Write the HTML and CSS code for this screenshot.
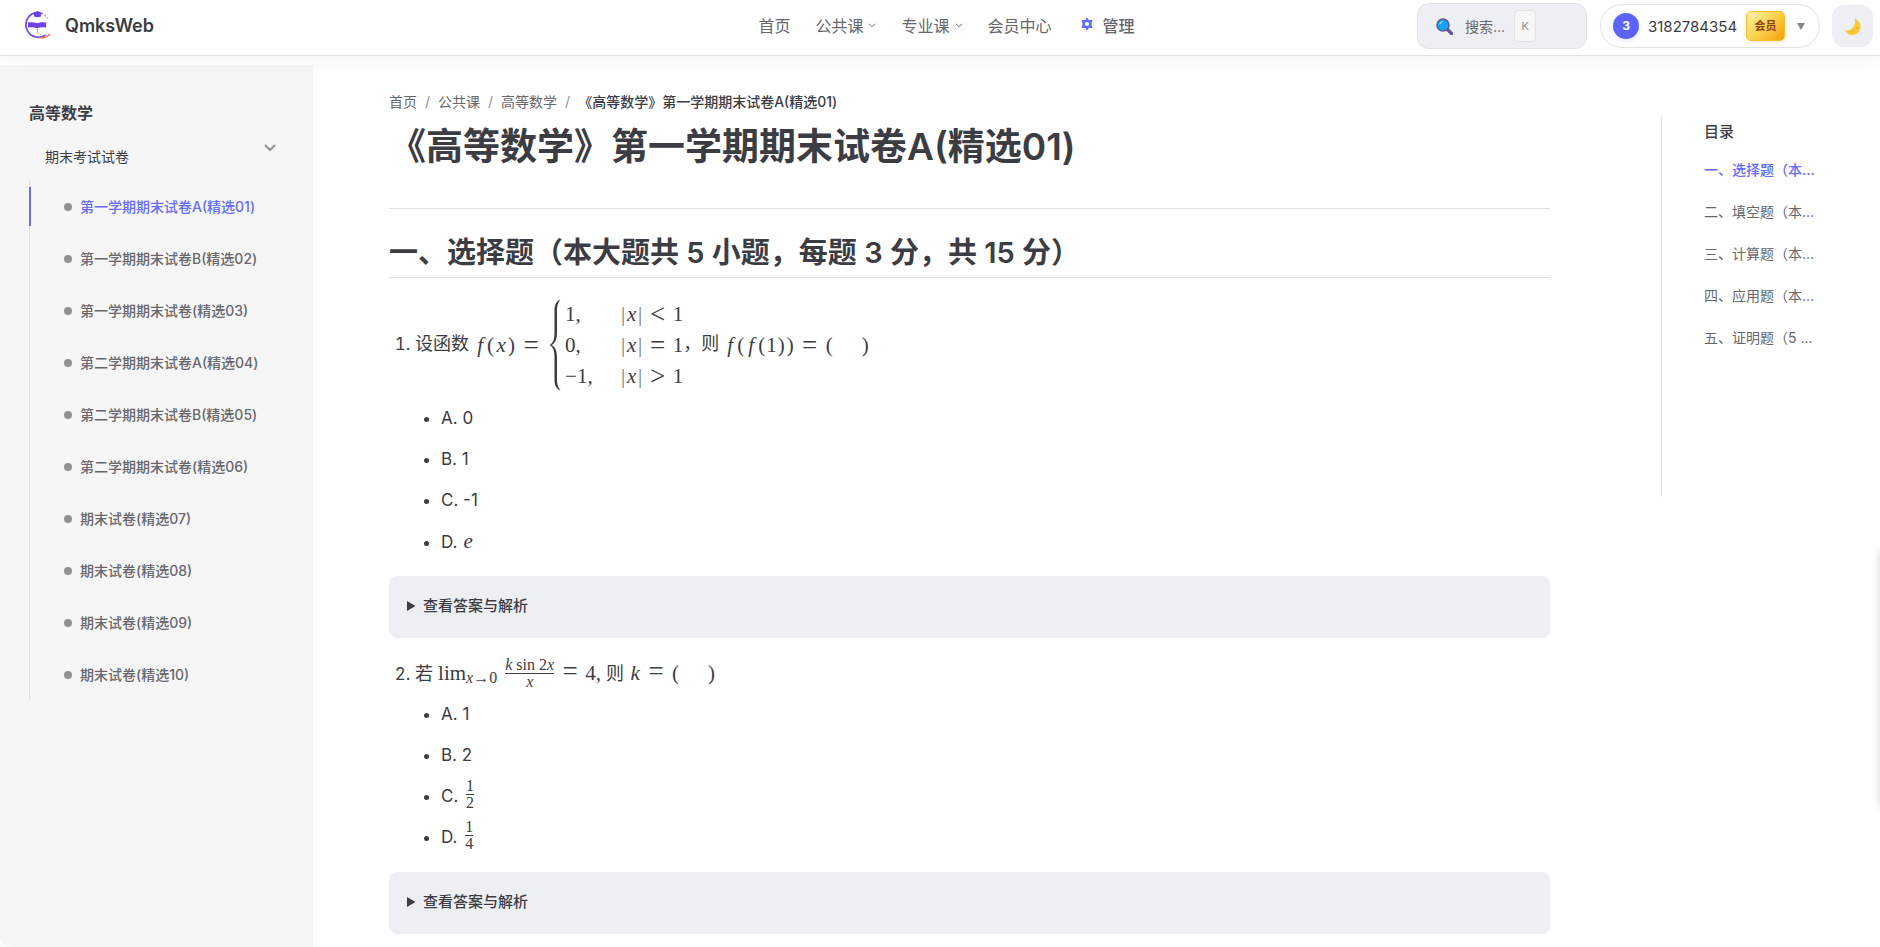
FILE: index.html
```html
<!DOCTYPE html>
<html lang="zh-CN">
<head>
<meta charset="utf-8">
<meta name="viewport" content="width=device-width, initial-scale=1">
<title>QmksWeb</title>
<link rel="stylesheet" href="styles.css">
</head>
<body>
<header class="header">
  <a class="brand" href="#">
    <svg class="logo" viewBox="0 0 28 30" fill="none">
      <path d="M8 4A12.500 12.500 0 1 0 21 25.500" stroke="#7353ee" stroke-width="1.800" stroke-linecap="round"/>
      <path d="M7 3.500L13.500 1L19.500 3.500L13.500 6Z" fill="#6b3fe6"/>
      <path d="M10 4.500h7v2q-3.500 1.600-7 0z" fill="#6b3fe6"/>
      <path d="M4 12.500q5-1 9.200 .8q4-1.800 9-.8v5q-5-1-9 .8q-4.200-1.800-9.200-.8z" fill="#7040ea"/>
      <path d="M13.300 19v2l1 3" stroke="#ff8a70"/>
      <path d="M15 27.500q6 1.500 11-3.500" stroke="#ff6b4e" stroke-width="1.500"/>
      <circle cx="21" cy="5.500" r=".9" fill="#ff7b5c"/><circle cx="23.500" cy="8" r=".8" fill="#ff7b5c"/>
    </svg>
    <span>QmksWeb</span>
  </a>
  <nav class="nav">
    <a href="#">首页</a>
    <a href="#">公共课<svg class="caret" viewBox="0 0 8 5"><path d="M1 .8l3 3 3-3"/></svg></a>
    <a href="#">专业课<svg class="caret" viewBox="0 0 8 5"><path d="M1 .8l3 3 3-3"/></svg></a>
    <a href="#">会员中心</a>
    <a class="manage" href="#"><svg class="gear" viewBox="0 0 12 14"><path fill-rule="evenodd" d="M6 .5L7.800 3H11.500L10.400 7l1.100 4H7.800L6 13.500 4.200 11H.5L1.600 7 .5 3h3.700zM6 5a2 2 0 1 0 0 4 2 2 0 0 0 0-4z"/></svg>管理</a>
  </nav>
  <div class="tools">
    <button class="search" type="button">
      <svg class="lens" viewBox="0 0 17 17"><path d="M10.500 10.500l5 5" stroke="#62559a" stroke-width="3.400" stroke-linecap="round"/><circle cx="7" cy="7" r="6" fill="#12a5f2" stroke="#62559a" stroke-width="1.500"/><path d="M3.800 6q.7-2 2.500-2.400" fill="none" stroke="#8bd8ff" stroke-width="1.200" stroke-linecap="round"/></svg>
      <span>搜索...</span><kbd>K</kbd>
    </button>
    <button class="user" type="button">
      <span class="avatar">3</span><span class="name">3182784354</span><span class="badge">会员</span><svg class="drop" viewBox="0 0 8 7"><path d="M0 0h8L4 7z"/></svg>
    </button>
    <button class="theme" type="button" aria-label="切换主题">
      <svg viewBox="0 0 17 17"><path d="M10.800.8A8.300 8.300 0 1 1 .8 12.200C8 13.500 11.800 8 10.800.8z" fill="#fbc83a"/><circle cx="13" cy="10" r="1" fill="#eba72b"/><circle cx="8.500" cy="13.500" r=".9" fill="#eba72b"/></svg>
    </button>
  </div>
</header>
<div class="layout">
  <aside class="sidebar">
    <h2 class="side-title">高等数学</h2>
    <div class="group"><span>期末考试试卷</span><svg class="chevron" viewBox="0 0 12 8"><path d="M1 1l5 5 5-5"/></svg></div>
    <ul class="papers">
      <li class="active"><a href="#">第一学期期末试卷A(精选01)</a></li>
      <li><a href="#">第一学期期末试卷B(精选02)</a></li>
      <li><a href="#">第一学期期末试卷(精选03)</a></li>
      <li><a href="#">第二学期期末试卷A(精选04)</a></li>
      <li><a href="#">第二学期期末试卷B(精选05)</a></li>
      <li><a href="#">第二学期期末试卷(精选06)</a></li>
      <li><a href="#">期末试卷(精选07)</a></li>
      <li><a href="#">期末试卷(精选08)</a></li>
      <li><a href="#">期末试卷(精选09)</a></li>
      <li><a href="#">期末试卷(精选10)</a></li>
    </ul>
  </aside>
  <main class="content">
    <nav class="crumbs"><a href="#">首页</a><i>/</i><a href="#">公共课</a><i>/</i><a href="#">高等数学</a><i>/</i><span>《高等数学》第一学期期末试卷A(精选01)</span></nav>
    <h1>《高等数学》第一学期期末试卷A(精选01)</h1>
    <h2 class="section">一、选择题（本大题共 5 小题，每题 3 分，共 15 分）</h2>
    <ol class="question">
      <li>
        <div class="stem tall">设函数
          <span class="math"><var>f</var><b>(</b><var>x</var><b>)</b><u>=</u><svg class="brace" viewBox="0 0 12 92"><path d="M11.500.5C6 2.500 5.500 7 5.500 13v20c0 7-1 11-5 13 4 2 5 6 5 13v20c0 6 .5 10.500 6 12.500-3-3-3.500-7-3.500-12V59c0-7-1.500-11-5.500-13 4-2 5.500-6 5.500-13V13c0-5 .5-9.500 3.500-12.500z"/></svg><span class="cases"><span>1,</span><span><s>|</s><var>x</var><s>|</s><u>&lt;</u>1</span><span>0,</span><span><s>|</s><var>x</var><s>|</s><u>=</u>1</span><span>−1,</span><span><s>|</s><var>x</var><s>|</s><u>&gt;</u>1</span></span></span>，则
          <span class="math"><var>f</var><b>(</b><var>f</var><b>(</b>1<b>)</b><b>)</b><u>=</u><b>(</b><span class="blank"></span><b>)</b></span>
        </div>
        <ul><li>A. 0</li><li>B. 1</li><li>C. -1</li><li>D. <span class="math"><var>e</var></span></li></ul>
      </li>
    </ol>
    <details class="answer"><summary>查看答案与解析</summary></details>
    <ol class="question compact" start="2">
      <li>
        <div class="stem">若
          <span class="math">lim<sub>x→<em>0</em></sub><span class="frac wide"><span><i>k</i> sin 2<i>x</i></span><span><i>x</i></span></span><u>=</u>4,</span> 则
          <span class="math"><var>k</var><u>=</u><b>(</b><span class="blank"></span><b>)</b></span>
        </div>
        <ul><li>A. 1</li><li>B. 2</li><li>C. <span class="frac math small"><span>1</span><span>2</span></span></li><li>D. <span class="frac math small"><span>1</span><span>4</span></span></li></ul>
      </li>
    </ol>
    <details class="answer"><summary>查看答案与解析</summary></details>
  </main>
  <aside class="toc">
    <h2>目录</h2>
    <a class="current" href="#">一、选择题（本...</a>
    <a href="#">二、填空题（本...</a>
    <a href="#">三、计算题（本...</a>
    <a href="#">四、应用题（本...</a>
    <a href="#">五、证明题（5 ...</a>
  </aside>
</div>
<div class="drawer"></div>
</body>
</html>
```
FILE: styles.css
```css
* { box-sizing: border-box; }
body { margin: 0; min-height: 100vh; display: flex; flex-direction: column; background: #fff; color: #3c3c43; font-family: Inter, "Noto Sans CJK SC", sans-serif; font-size: 14px; }
a { color: inherit; text-decoration: none; }
button { font: inherit; color: inherit; cursor: pointer; }
h1, h2, ul, ol { margin: 0; padding: 0; }

.header { position: relative; z-index: 1; height: 56px; flex: none; padding: 0 7px 0 24px; display: grid; grid-template-columns: 1fr auto 1fr; align-items: start; background: #fff; border-bottom: 1px solid #e2e2e3; box-shadow: 0 4px 24px rgba(0, 0, 0, .05); }
.brand { display: flex; align-items: center; gap: 13px; height: 50px; font-size: 18px; font-weight: 600; }
.logo { width: 28px; height: 30px; }
.nav { display: flex; align-items: center; gap: 25px; height: 50px; padding-right: 4px; font-size: 16px; color: #67676c; }
.nav a { display: flex; align-items: center; }
.caret { width: 8px; height: 5px; margin-left: 5px; fill: none; stroke: #67676c; }
.nav .manage { margin-left: 4px; font-weight: 500; }
.gear { width: 12px; height: 14px; margin: 0 10px 2px 0; fill: #646cff; }
.tools { display: flex; justify-content: flex-end; align-items: center; height: 52px; gap: 12px; }
.search { display: flex; align-items: center; width: 170px; height: 46px; margin-right: 1px; padding: 0 18px; border: 1px solid #e2e2e3; border-radius: 12px; background: #eeeff3; color: #67676c; }
.lens { width: 17px; height: 17px; margin-right: 12px; }
.search kbd { margin-left: 9px; width: 22px; height: 32px; border: 1px solid #e2e2e3; border-radius: 4px; background: #f6f6f7; color: #929295; font: 11px/30px Inter, sans-serif; text-align: center; }
.user { display: flex; align-items: center; height: 44px; width: 220px; padding: 0 12px; border: 1px solid #e2e2e3; border-radius: 22px; background: #fff; }
.avatar { width: 26px; height: 26px; border-radius: 50%; background: #5b63fb; color: #fff; font-size: 12px; line-height: 26px; font-weight: 700; box-shadow: 0 2px 4px rgba(91, 99, 251, .15); }
.name { margin-left: 9px; font-size: 15px; }
.badge { margin-left: auto; width: 39px; height: 30px; border: 1px solid #fbbf24; border-radius: 5px; background: linear-gradient(135deg, #fef0b0, #fcd34d 50%, #f59e0b); color: #92400e; font-size: 11px; line-height: 28px; font-weight: 700; box-shadow: 0 2px 5px rgba(245, 158, 11, .2); }
.drop { width: 8px; height: 7px; margin: 0 2px 0 12px; fill: #85858a; }
.theme { width: 41px; height: 42px; padding: 0; border: 0; border-radius: 12px; background: #eeeff3; display: grid; place-items: center; }
.theme svg { width: 17px; height: 17px; }

.layout { flex: 1; display: grid; grid-template-columns: 313px minmax(0, 1fr) 219px; align-items: start; }
.sidebar { align-self: stretch; margin-top: 9px; padding: 32px 29px 0; background: #f6f6f7; border-bottom-left-radius: 10px; }
.side-title { font-size: 16px; line-height: 32px; font-weight: 600; }
.group { display: flex; justify-content: space-between; height: 45px; margin-top: 6px; padding: 0 8px 0 16px; line-height: 44px; }
.group .chevron { width: 12px; height: 8px; margin-top: 9px; fill: none; stroke: #929295; stroke-width: 2; }
.papers { list-style: none; border-left: 1px solid #e2e2e3; }
.papers li { display: flex; align-items: center; height: 52px; color: #67676c; font-weight: 500; }
.papers a { display: flex; align-items: center; height: 39px; margin-left: -1px; padding-left: 33px; border-left: 2px solid transparent; }
.papers a::before { content: ""; width: 8px; height: 8px; margin: 2px 8px 0 0; border-radius: 50%; background: #929295; }
.papers .active a { border-color: #646cff; color: #646cff; }

.content { padding: 36px 111px 13px 76px; }
.crumbs { font-size: 14px; line-height: 20px; color: #67676c; }
.crumbs i { margin: 0 8px; font-style: normal; color: #929295; }
.crumbs span { color: #3c3c43; font-weight: 500; }
h1 { height: 97px; padding-top: 11px; border-bottom: 1px solid #e2e2e3; font-size: 37px; line-height: 48px; font-weight: 600; }
.section { height: 69px; padding-top: 23px; border-bottom: 1px solid #e2e2e3; font-size: 29px; line-height: 42px; font-weight: 600; }
.question { padding-left: 26px; font-size: 18px; line-height: 28px; }
.question > li { padding-top: 21px; }
.question.compact > li { padding-top: 19px; }
.question > li::marker, .question ul li { font-size: 17px; }
.stem { min-height: 36px; line-height: 28px; }
.stem.tall { min-height: 98px; }
.question ul { padding: 1px 0 14px 26px; list-style: disc; }
.question ul li { height: 41px; padding-top: 6px; }
.math { display: inline-flex; align-items: baseline; vertical-align: baseline; font-family: "Liberation Serif", serif; font-size: 21px; line-height: 28px; }
.math var { min-width: 12px; text-align: center; }
.math b { min-width: 9px; font-weight: 400; text-align: center; }
.math u { margin: 0 6px; min-width: 18px; text-align: center; text-decoration: none; font-size: 27px; }
.math s { width: 5px; text-align: center; text-decoration: none; color: #77777c; }
.blank { width: 27px; }
.tall .math { align-items: center; vertical-align: middle; }
.brace { width: 12px; height: 92px; margin: 0 4px 0 3px; fill: #3c3c43; }
.cases { display: grid; grid-template-columns: auto auto; column-gap: 28px; row-gap: 3px; }
.cases > span { display: flex; align-items: center; }
.math sub { align-self: center; padding-top: 8px; font-size: 16px; line-height: 18px; font-style: italic; }
.math em { font-style: normal; }
.frac { display: inline-flex; flex-direction: column; align-self: center; text-align: center; font-size: 16px; line-height: 16px; }
.frac span + span { border-top: 1px solid #3c3c43; }
.frac.wide { min-width: 49px; margin: 0 1px 0 8px; }
.frac.small { align-items: stretch; vertical-align: middle; margin: -6px 0 0 3px; font-size: 16px; line-height: 16px; }
.answer { height: 62px; padding: 17px 18px 0; border-radius: 8px; background: #eeeff3; }
.answer summary { font-size: 15px; line-height: 26px; font-weight: 500; cursor: pointer; }

.toc { margin-top: 60px; min-height: 381px; padding: 0 16px 0 42px; border-left: 1px solid #e2e2e3; color: #67676c; }
.toc h2 { color: #3c3c43; font-size: 15px; line-height: 32px; font-weight: 500; }
.toc a { display: block; height: 42px; line-height: 44px; }
.toc .current { color: #646cff; font-weight: 500; }
.drawer { position: fixed; top: 550px; right: -20px; width: 20px; height: 256px; box-shadow: 0 0 8px rgba(0, 0, 0, .16); }
```
